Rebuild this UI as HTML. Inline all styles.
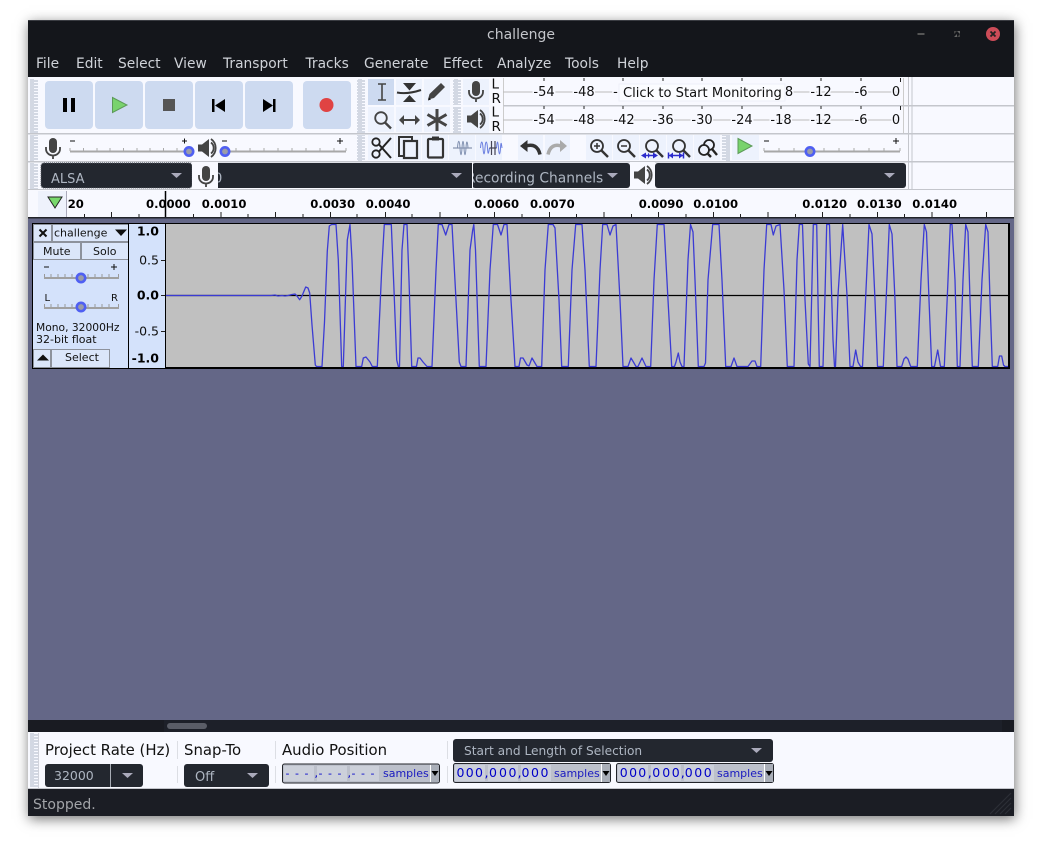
<!DOCTYPE html>
<html><head><meta charset="utf-8"><style>
html,body{margin:0;padding:0;background:#fff;width:1046px;height:856px;overflow:hidden}
#w{position:absolute;left:28px;top:20px;width:986px;height:796px;box-shadow:1px 3px 12px rgba(0,0,0,.55)}
svg{position:absolute;left:0;top:0}
text{font-family:"DejaVu Sans","Liberation Sans",sans-serif}
.m{font-size:13.8px;fill:#cfd2d8}
.r{font-size:11.6px;font-weight:bold;fill:#000}
.v{font-size:13px;fill:#111}
.t{font-size:11px;fill:#111}
.l{font-size:14.9px;fill:#111}
.c{font-size:13px;fill:#aeb6c2}
.s{font-size:11px;fill:#1a1ac0}
.d{font-size:12.5px;fill:#0000c8}
.b{fill:#edf2fd}
</style></head><body><div id="w"></div>
<svg width="1046" height="856" viewBox="0 0 1046 856">
<defs>
<pattern id="gp" width="8" height="3" patternUnits="userSpaceOnUse"><rect width="8" height="3" fill="#d3d8e3"/><rect x="2" y="1" width="4" height="1" fill="#f8f9ff"/></pattern>
<g id="mic"><rect x="-4" y="-10" width="8" height="15" rx="4" fill="#444"/><path d="M-7-1V1a7 6.500 0 0 0 14 0V-1M0 7.500V11" fill="none" stroke="#444" stroke-width="1.800"/></g>
<g id="spk"><path d="M-8-3.500H-4L3-9V9L-4 3.500H-8Z" fill="#444"/><path d="M5-5.500a7 7 0 0 1 0 11M5-9a11 11 0 0 1 0 18" fill="none" stroke="#444" stroke-width="1.800"/></g>
<g id="kn"><circle r="4.200" fill="#9a9ca8" stroke="#4f5ff2" stroke-width="2.600"/></g>
</defs>

<!-- window -->
<rect x="28" y="20" width="986" height="796" fill="#14161b"/>
<rect x="28" y="20" width="986" height="1" fill="#3a3c42"/>
<text x="521" y="39" text-anchor="middle" style="font-size:14px" fill="#c4c6cb">challenge</text>
<rect x="917.500" y="33" width="7" height="2" fill="#555"/>
<path d="M954 37 957 37 957 34ZM957 31 960 31 960 34Z" fill="#666"/><path d="M954 34 957 31 954 31ZM960 34 957 37 960 37Z" fill="#444"/>
<circle cx="993" cy="34" r="7" fill="#cc4c58"/><path d="M990.500 31.500 995.500 36.500M995.500 31.500 990.500 36.500" stroke="#222" stroke-width="1.800"/>

<text class="m" x="36" y="68">File</text><text class="m" x="76" y="68">Edit</text><text class="m" x="118" y="68">Select</text><text class="m" x="174" y="68">View</text><text class="m" x="223" y="68">Transport</text><text class="m" x="305.500" y="68">Tracks</text><text class="m" x="364" y="68">Generate</text><text class="m" x="443" y="68">Effect</text><text class="m" x="497" y="68">Analyze</text><text class="m" x="565" y="68">Tools</text><text class="m" x="617" y="68">Help</text>

<!-- toolbar bg -->
<rect x="28" y="77" width="986" height="113" fill="#f8f9ff"/>
<rect x="28" y="133" width="986" height="1.500" fill="#c4c6cc"/>
<rect x="28" y="161" width="986" height="1.500" fill="#c4c6cc"/>
<rect x="503" y="105" width="511" height="1.500" fill="#c4c6cc"/>
<rect x="908" y="77" width="1" height="113" fill="#c4c6cc"/><rect x="911.500" y="77" width="1" height="113" fill="#c4c6cc"/>

<rect x="30" y="79" width="8" height="54" fill="url(#gp)"/>
<rect x="30" y="135" width="8" height="26" fill="url(#gp)"/>
<rect x="30" y="163" width="8" height="26" fill="url(#gp)"/>
<rect x="357" y="79" width="8" height="54" fill="url(#gp)"/>
<rect x="357" y="135" width="8" height="26" fill="url(#gp)"/>
<rect x="453" y="79" width="8" height="26" fill="url(#gp)"/>
<rect x="453" y="107" width="8" height="26" fill="url(#gp)"/>
<rect x="722" y="135" width="8" height="26" fill="url(#gp)"/>

<!-- transport -->
<g fill="#cddaf0"><rect x="45" y="81" width="48" height="48" rx="4"/><rect x="95" y="81" width="48" height="48" rx="4"/><rect x="145" y="81" width="48" height="48" rx="4"/><rect x="195" y="81" width="48" height="48" rx="4"/><rect x="245" y="81" width="48" height="48" rx="4"/><rect x="303" y="81" width="48" height="48" rx="4"/></g>
<rect x="63" y="98" width="4" height="14" fill="#000"/><rect x="71" y="98" width="4" height="14" fill="#000"/>
<path d="M112.500 97.500V112.500L127 105Z" fill="#79d36d" stroke="#5c9a58"/>
<rect x="163" y="99" width="12" height="12" fill="#555"/>
<rect x="212" y="99" width="2.500" height="13" fill="#000"/><path d="M225 99V112L215 105.500Z" fill="#000"/>
<rect x="273" y="99" width="2.500" height="13" fill="#000"/><path d="M263 99V112L273 105.500Z" fill="#000"/>
<circle cx="326.500" cy="105" r="7" fill="#e04343"/>

<!-- mixer row -->
<use href="#mic" x="53" y="148"/>
<use href="#spk" x="206" y="148"/>
<rect x="70" y="150.500" width="118" height="2" fill="#a8a8a8"/>
<rect x="222" y="150.500" width="124" height="2" fill="#a8a8a8"/>
<path d="M70 141h5M182 141h5M184.500 138.500v5M222 141h5M337 141h6M340 138v6M764 141h5M893 141h6M896 138v6" stroke="#111" stroke-width="1"/>
<path d="M70 148v3M83.500 148v3M97 148v3M110 148v3M123.500 148v3M137 148v3M150 148v3M163.500 148v3M177 148v3M222.500 148v3M236 148v3M250 148v3M264 148v3M278 148v3M292 148v3M306 148v3M320 148v3M334 148v3M346 148v3M764 148v3M779 148v3M794 148v3M809 148v3M824 148v3M839 148v3M854 148v3M869 148v3M884 148v3M900 148v3" stroke="#aaa"/>
<use href="#kn" x="189" y="151.500"/><use href="#kn" x="225" y="151.500"/>

<!-- device row -->
<rect x="41" y="163" width="151" height="25" rx="3" fill="#23272f" stroke="#555a63" stroke-dasharray="1 1"/>
<text class="c" x="51" y="183">ALSA</text>
<path d="M171 173H182L176.500 178Z" fill="#aab"/>
<rect x="218" y="163" width="254" height="25" fill="#23272f"/>
<rect x="192" y="162" width="26" height="27" fill="#f8f9ff"/>
<svg x="218" y="163" width="10" height="25"><text class="c" x="-4" y="19.500">0</text></svg>
<use href="#mic" x="206" y="176"/>
<path d="M451 173H462L456.500 178Z" fill="#aab"/>
<rect x="472" y="163" width="158" height="25" rx="3" fill="#23272f"/>
<svg x="473" y="163" width="157" height="25"><text class="c" x="-7" y="19.500" style="font-size:13.8px">Recording Channels</text></svg>
<rect x="472" y="162" width="1" height="27" fill="#f8f9ff"/>
<path d="M607 173H618L612.500 178Z" fill="#aab"/>
<rect x="655" y="163" width="251" height="25" rx="3" fill="#23272f"/>
<rect x="630" y="162" width="25" height="27" fill="#f8f9ff"/>
<use href="#spk" x="642" y="175"/>
<path d="M884 173H895L889.500 178Z" fill="#aab"/>

<!-- tools -->
<g class="b">
<rect x="396" y="79" width="26" height="26"/><rect x="424" y="79" width="26" height="26"/>
<rect x="368" y="107" width="26" height="25"/><rect x="396" y="107" width="26" height="25"/><rect x="424" y="107" width="26" height="25"/>
<rect x="368" y="135" width="26" height="25"/><rect x="395" y="135" width="26" height="25"/><rect x="422" y="135" width="26" height="25"/><rect x="449" y="135" width="26" height="25"/><rect x="476" y="135" width="26" height="25"/>
<rect x="518" y="135" width="25" height="25"/><rect x="545" y="135" width="25" height="25"/>
<rect x="586" y="135" width="26" height="25"/><rect x="613" y="135" width="26" height="25"/><rect x="640" y="135" width="26" height="25"/><rect x="667" y="135" width="26" height="25"/><rect x="694" y="135" width="26" height="25"/>
<rect x="732" y="135" width="27" height="25"/>
<rect x="463" y="79" width="26" height="26"/><rect x="463" y="107" width="26" height="26"/>
</g>
<rect x="368" y="79" width="26" height="26" fill="#cddaf0"/>
<!-- I beam -->
<path d="M378 84h8M382 84v16M378 100h8" stroke="#444" stroke-width="1.600" fill="none"/>
<!-- envelope -->
<path d="M397 92.500C405 94 412 93 421 90" stroke="#333" stroke-width="2" fill="none"/>
<path d="M403 83H416L409.500 90.500ZM403 102H416L409.500 95Z" fill="#333"/>
<!-- pencil -->
<path d="M428 99.500 429.500 94 441 83 445 87 434 98Z" fill="#444"/><path d="M428 100.500l3-1-2-2Z" fill="#111"/>
<!-- zoom tool -->
<circle cx="381" cy="118" r="5.800" fill="none" stroke="#444" stroke-width="1.800"/><path d="M385 122.500 391 128.500" stroke="#444" stroke-width="2.400"/>
<!-- time shift -->
<path d="M402 120H417" stroke="#444" stroke-width="2"/><path d="M399 120 404 115V125ZM420 120 415 115V125Z" fill="#444"/>
<!-- multi -->
<path d="M437 109V131M427.500 114.500 446.500 125.500M446.500 114.500 427.500 125.500" stroke="#444" stroke-width="3"/>
<!-- scissors -->
<circle cx="376" cy="154" r="3.700" fill="none" stroke="#222" stroke-width="1.800"/><circle cx="376" cy="142" r="3.700" fill="none" stroke="#222" stroke-width="1.800"/>
<path d="M379 151.500 391 138M379 144.500 391 158" stroke="#222" stroke-width="2"/>
<!-- copy -->
<path d="M403 156H399V137H412V140" fill="none" stroke="#333" stroke-width="2"/><rect x="404" y="141" width="13" height="17" fill="none" stroke="#333" stroke-width="2.200"/>
<!-- paste -->
<rect x="428" y="139" width="15" height="18.500" rx="1" fill="none" stroke="#333" stroke-width="2.200"/><rect x="432" y="136.500" width="7" height="4" fill="#333"/>
<!-- trim / silence -->
<path d="M453 148H472" stroke="#8a96b0" stroke-width="1.200"/>
<path d="M457.500 148C458 139 459.500 139 460 148S461.500 157 462 148 463.500 139 464 148 465.500 157 466 148 467.500 141 468 148" stroke="#8090b0" stroke-width="1" fill="none"/>
<path d="M480.500 148C481 140 482.500 140 483 148S484.500 156 485 148 487 140 487.500 148 488.500 154 489.500 148M496.500 148C497 140 498 140 498.500 148S500 156 500.500 148 501.500 144 502 148" stroke="#6a7ee0" stroke-width="1" fill="none"/><path d="M491.500 141v14M495 141v14M489.500 148h7" stroke="#445" stroke-width="1.200"/>
<!-- undo redo -->
<path d="M520 146 527.500 140V152Z" fill="#333"/><path d="M526 146C533 144 538 146 540 154.500" fill="none" stroke="#333" stroke-width="3.500"/>
<path d="M567 146 560 140V152Z" fill="#aaa"/><path d="M561 146C555 144 550 146 548 154.500" fill="none" stroke="#aaa" stroke-width="3.500"/>
<!-- zooms -->
<circle cx="597" cy="146" r="6" fill="none" stroke="#333" stroke-width="1.800"/><path d="M594 146h6M597 143v6" stroke="#333" stroke-width="1.500"/><path d="M601.500 150.500 608 157" stroke="#333" stroke-width="2.400"/>
<circle cx="624" cy="146" r="6" fill="none" stroke="#333" stroke-width="1.800"/><path d="M621 146h6" stroke="#333" stroke-width="1.500"/><path d="M628.500 150.500 635 157" stroke="#333" stroke-width="2.400"/>
<circle cx="652" cy="146" r="6" fill="none" stroke="#333" stroke-width="1.800"/><path d="M656.500 150.500 663 157" stroke="#333" stroke-width="2.400"/><path d="M643 155.500H656" stroke="#2a2acc" stroke-width="1.500"/><path d="M641 155.500 646 152.500V158.500ZM658 155.500 653 152.500V158.500ZM650 155.500 648 152.500V158.500Z" fill="#2a2acc"/>
<circle cx="679" cy="146" r="6" fill="none" stroke="#333" stroke-width="1.800"/><path d="M683.500 150.500 690 157" stroke="#333" stroke-width="2.400"/><path d="M669 155.500H683M668.500 152.500V158.500M683.500 152.500V158.500" stroke="#2a2acc" stroke-width="1.500"/><path d="M669 155.500 673 152.500V158.500ZM683 155.500 679 152.500V158.500Z" fill="#2a2acc"/>
<circle cx="709" cy="145" r="5" fill="none" stroke="#222" stroke-width="1.800"/><circle cx="704" cy="150" r="5" fill="#edf2fd" stroke="#222" stroke-width="1.800"/><path d="M712 149 717 155M708 154 711 157" stroke="#222" stroke-width="2.400"/>
<path d="M738 138.500V153.500L752 146Z" fill="#79d36d" stroke="#5c9a58"/>
<rect x="764" y="150.500" width="136" height="2" fill="#a8a8a8"/><use href="#kn" x="810" y="151.500"/>

<!-- meters -->
<use href="#mic" x="476" y="91"/><use href="#spk" x="475" y="119"/>
<text class="v" x="491.500" y="88.500" style="font-size:13.500px">L</text><text class="v" x="491.500" y="103" style="font-size:13.500px">R</text>
<text class="v" x="491.500" y="116.500" style="font-size:13.500px">L</text><text class="v" x="491.500" y="131" style="font-size:13.500px">R</text>
<rect x="503" y="78" width="1" height="27" fill="#ccc"/><rect x="503" y="106" width="1" height="27" fill="#ccc"/>
<rect x="503" y="91.500" width="396" height="1" fill="#bbb"/><rect x="503" y="119.500" width="396" height="1" fill="#bbb"/>
<path d="M544 78v3M584 78v3M623 78v3M663 78v3M702 78v3M742 78v3M781 78v3M821 78v3M861 78v3M900.500 78v4M544 106v3M584 106v3M623 106v3M663 106v3M702 106v3M742 106v3M781 106v3M821 106v3M861 106v3M900.500 106v4" stroke="#222"/>
<path d="M903.500 78V105M903.500 106V133" stroke="#ccc"/>
<g class="v" text-anchor="middle" style="paint-order:stroke;stroke:#f8f9ff;stroke-width:3px">
<text x="544" y="96">-54</text><text x="584" y="96">-48</text><text x="615.500" y="96">-</text><text x="789" y="96">8</text><text x="821" y="96">-12</text><text x="861" y="96">-6</text><text x="896" y="96">0</text>
<text x="544" y="124">-54</text><text x="584" y="124">-48</text><text x="624" y="124">-42</text><text x="663" y="124">-36</text><text x="702" y="124">-30</text><text x="742" y="124">-24</text><text x="781" y="124">-18</text><text x="821" y="124">-12</text><text x="861" y="124">-6</text><text x="896" y="124">0</text>
</g>
<rect x="619" y="84" width="166" height="17" fill="#fbfcff" stroke="#eef0f8"/>
<text x="623" y="97" style="font-size:13.100px" fill="#111">Click to Start Monitoring</text>

<!-- ruler -->
<rect x="28" y="190" width="986" height="28" fill="#f8f9ff"/>
<rect x="28" y="189" width="986" height="1" fill="#c4c6cc"/>
<rect x="38" y="191" width="28" height="26" fill="#eef2fc"/><rect x="66" y="191" width="1" height="26" fill="#aab"/>
<path d="M48 197H62L55 208Z" fill="#78d86c" stroke="#222" stroke-width="1"/>
<svg x="67" y="190" width="20" height="26"><text class="r" x="0.700" y="18">20</text></svg>
<text class="r" x="146" y="208">0.0000</text><text class="r" x="201.700" y="208">0.0010</text><text class="r" x="310.300" y="208">0.0030</text><text class="r" x="365.700" y="208">0.0040</text><text class="r" x="474.300" y="208">0.0060</text><text class="r" x="530" y="208">0.0070</text><text class="r" x="638.700" y="208">0.0090</text><text class="r" x="693.300" y="208">0.0100</text><text class="r" x="802.300" y="208">0.0120</text><text class="r" x="857" y="208">0.0130</text><text class="r" x="912.300" y="208">0.0140</text>
<path d="M84.500 214v3M111.500 212v5M139 214v3M193.500 214v3M221 212v5M248 214v3M275.500 212v5M303 214v3M330.500 212v5M357 214v3M385.500 212v5M412 214v3M440 212v5M467.500 214v3M494.500 212v5M522 214v3M549.500 212v5M576.500 214v3M604 212v5M631.500 214v3M658.500 212v5M686 214v3M713.500 212v5M740.500 214v3M768 212v5M795.500 214v3M822.500 212v5M850 214v3M877.500 212v5M904.500 214v3M932 212v5M959.500 214v3M986.500 212v5" stroke="#222"/>
<path d="M165.500 191v26" stroke="#000" stroke-width="1.500"/>
<rect x="28" y="217" width="986" height="1.500" fill="#22242a"/>

<!-- track area -->
<rect x="28" y="218.500" width="986" height="502" fill="#646787"/>
<rect x="32" y="223" width="978" height="146" fill="#000"/>
<rect x="33" y="224" width="95" height="144" fill="#d4e2fb"/>
<rect x="129" y="224" width="36" height="144" fill="#d4e2fb"/>
<rect x="166" y="224" width="842" height="143" fill="#c0c0c0"/>
<!-- track controls -->
<g fill="#dbe6fa" stroke="#8d929c" stroke-width="1">
<rect x="33.500" y="224.500" width="18" height="17"/><rect x="52.500" y="224.500" width="76" height="17"/>
<rect x="33.500" y="242.500" width="47" height="17"/><rect x="81.500" y="242.500" width="47" height="17"/>
<rect x="33.500" y="349.500" width="17" height="18"/><rect x="51.500" y="349.500" width="58" height="18"/>
</g>
<path d="M39.500 229.500 46.500 236.500M46.500 229.500 39.500 236.500" stroke="#111" stroke-width="2"/>
<text class="t" x="54" y="236.500">challenge</text><path d="M115 229.500H127L121 236Z" fill="#111"/>
<text class="t" x="43" y="255">Mute</text><text class="t" x="93" y="255">Solo</text>
<path d="M37 360.500 43 354.500 49 360.500Z" fill="#111"/><text class="t" x="65" y="361">Select</text>
<path d="M44 267h5M111 267h6M114 264v6" stroke="#111"/>
<text class="t" x="44.500" y="301" style="font-size:10px">L</text><text class="t" x="111" y="301" style="font-size:10px">R</text>
<rect x="44" y="277" width="75" height="2" fill="#a0a0a0"/><rect x="44" y="307" width="75" height="2" fill="#a0a0a0"/>
<path d="M44.500 274v3M51 274v3M58 274v3M65 274v3M72 274v3M88 274v3M95 274v3M102 274v3M109 274v3M118.500 274v3M44.500 304v3M51 304v3M58 304v3M65 304v3M72 304v3M88 304v3M95 304v3M102 304v3M109 304v3M118.500 304v3" stroke="#999"/>
<use href="#kn" x="81" y="278"/><use href="#kn" x="81" y="307"/>
<text class="t" x="36" y="331" style="font-size:10.700px">Mono, 32000Hz</text><text class="t" x="36" y="343">32-bit float</text>
<!-- v ruler -->
<g text-anchor="end">
<text class="r" x="159" y="235.500" style="font-size:12.500px">1.0</text>
<text class="v" x="159" y="264.500" style="font-size:12.500px">0.5</text>
<text class="r" x="159" y="299.500" style="font-size:12.500px">0.0</text>
<text class="v" x="159" y="335.500" style="font-size:12.500px">-0.5</text>
<text class="r" x="159" y="362.500" style="font-size:12.500px">-1.0</text>
</g>
<path d="M161 260.500h4M161 295.500h4M161 331.500h4" stroke="#222"/>
<path d="M128.500 224V368M165.500 224V368" stroke="#000"/>
<!-- wave -->
<path d="M166 295.500H1008" stroke="#000" stroke-width="1.300"/>
<path fill="none" stroke="#3b3bd4" stroke-width="1.300" stroke-linejoin="round" d="M166 295.500H271L275 295 278 296 282 295.500 285 296 288 295.500 292 294.500 295 294 297 296 299.700 299.700 302 296 305.700 287 308 288 309.700 293 312 325 315.300 365 316.500 366.500H322L324.500 322 327.300 251 329.300 226 331.700 224.500H336L338.300 260 341.700 366.500H343.300L347.300 240 350 224.500 352 260 356 366.500H361.700L363.300 358 366 357 370 362 372.300 366.500H377.300L381.700 270 384.300 224.500H391.300L394 290 396.700 360 398.300 366.500H399.500L402 250 404 224.500H407L409 280 411.700 366.500H416.500L418 358 420 358 423 362 427 366.500H432L436 270 438.300 224.500H442L445.700 235 449 224.500H452L456 300 459.300 362 461 366.500H466L470 250 472.700 230 473.800 224.500 475.500 250 479.300 366.500H486L490 270 493.300 224.500H497.500L501 235 504 224.500H507L511 300 515 366.500H519L520.500 358 523 358 527 365 529 366 532 358 537 366.500H541.700L545 270 548.300 224.500H553L555 228 559 300 561.700 366.500H568.300L572 270 575.700 224.500H582L585 270 589.300 366.500H596L600 270 602.700 224.500H607L610 235 613 226 616 224.500 620 300 623 366.500H628L631 358 634 363 636 366.500H638L642 358 646 366.500H650.700L654 280 657.300 224.500H664L668 300 671.700 366.500H674.500L676 362 678.300 353 680 362 682 366.500H684L688 260 690.500 224.500 693 232 695 280 698.300 366.500H704L705.500 363 708 280 712.700 224.500H719L722 280 725.700 366.500H731L734 358 737 366.500H748L752 361 755 361 757 366.500H760.700L764 270 766.700 224.500H771L773.300 235 776 226 780 224.500 784 290 787.300 366.500H794L797 260 799.300 224.500H802.500L805 300 808.300 364 810 366.500 811.700 295 813.300 224.500H816.700L818 300 819.300 366.500H823L825 295 826.700 224.500H829.500L833 340 834.500 366.500H835.500L838 295 842.700 224.500 847 295 850 366.500H853L855.700 350 858 362 860.500 366.500H862.500L866 290 869 224.500 872 234 875 300 877.500 366.500H883.300L889.300 224.500 892 234 895 300 897 366.500H901.700L904 359 906 357 908 359 910.700 366.500H917.300L921 280 924.300 224.500 926.500 232 929 300 931.700 366.500H934.500L937.700 350 940.500 366.500H944.300L948 280 950.300 224.500H952L955 280 957.300 366.500H960L963 280 965.700 224.500 968 232 970 300 972.300 366.500H978.300L982 280 985.700 224.500 988 232 990 300 992.300 366.500H997.700L999.500 356H1001.700L1003.500 365 1005 366.500H1008"/>

<!-- scrollbar -->
<rect x="28" y="720" width="986" height="12" fill="#1d2029"/>
<rect x="28" y="720" width="136" height="12" fill="#191b22"/>
<rect x="1002" y="720" width="12" height="12" fill="#191b22"/>
<rect x="167" y="723" width="40" height="6" rx="3" fill="#5a5d67"/>

<!-- bottom -->
<rect x="28" y="732" width="986" height="57" fill="#f8f9ff"/>
<rect x="28" y="788" width="986" height="1" fill="#c4c6cc"/>
<rect x="30" y="733" width="8" height="54" fill="url(#gp)"/>
<rect x="38" y="733" width="1" height="55" fill="#d0d2da"/>
<text class="l" x="45" y="755">Project Rate (Hz)</text><text class="l" x="184" y="755">Snap-To</text><text class="l" x="282" y="755">Audio Position</text>
<path d="M177.500 741v18M177.500 766v17M275.500 741v18M275.500 766v17M447.500 741v18M447.500 766v17" stroke="#dcdee4"/>
<rect x="45" y="764" width="98" height="23" rx="3" fill="#23272f"/><rect x="110" y="764" width="1" height="23" fill="#a8adb5"/>
<text class="c" x="54" y="780" style="font-size:12.500px">32000</text><path d="M122 773H133L127.500 778Z" fill="#aab"/>
<rect x="184" y="764" width="85" height="23" rx="3" fill="#23272f"/>
<text class="c" x="195" y="781">Off</text><path d="M247 773H258L252.500 778Z" fill="#aab"/>
<!-- audio pos -->
<rect x="282.500" y="764" width="157" height="19" rx="2" fill="#bcc0cb" stroke="#22242a"/>
<rect x="284" y="766" width="30" height="15" fill="#ccd0da"/><rect x="317" y="766" width="30" height="15" fill="#ccd0da"/><rect x="350" y="766" width="29" height="15" fill="#ccd0da"/>
<text class="d" style="font-size:11px" x="285.500 295 304.500 314.500 318.500 328 337.500 347.500 351.500 361 370.500" y="777">---,---,---</text>
<text class="s" x="383" y="777">samples</text>
<rect x="430" y="765" width="9" height="17" fill="#a9aeb8"/><rect x="430" y="765" width="1" height="17" fill="#fff"/><path d="M431.500 771H438.500L435 776Z" fill="#000"/>
<!-- selection -->
<rect x="453" y="739" width="320" height="23" rx="3" fill="#23272f"/>
<text class="c" x="464" y="755" style="font-size:12.200px">Start and Length of Selection</text><path d="M751 748H762L756.500 753Z" fill="#aab"/>
<rect x="453.500" y="763.500" width="157" height="19" rx="2" fill="#bcc0cb" stroke="#22242a"/>
<rect x="455" y="765" width="30" height="16" fill="#ccd0da"/><rect x="488" y="765" width="30" height="16" fill="#ccd0da"/><rect x="521" y="765" width="30" height="16" fill="#ccd0da"/>
<text class="d" x="456.500 465.800 475 484.500 489 499 508.500 517.500 521.500 531 540.500" y="777">000,000,000</text><text class="s" x="554" y="777">samples</text>
<rect x="601" y="764" width="9" height="18" fill="#a9aeb8"/><rect x="601" y="764" width="1" height="18" fill="#fff"/><path d="M602.500 771H609.500L606 776Z" fill="#000"/>
<rect x="616.500" y="763.500" width="157" height="19" rx="2" fill="#bcc0cb" stroke="#22242a"/>
<rect x="618" y="765" width="30" height="16" fill="#ccd0da"/><rect x="651" y="765" width="30" height="16" fill="#ccd0da"/><rect x="684" y="765" width="30" height="16" fill="#ccd0da"/>
<text class="d" x="619.800 629.100 638.300 647.800 652.300 662.300 671.800 680.800 684.800 694.300 703.800" y="777">000,000,000</text><text class="s" x="717" y="777">samples</text>
<rect x="764" y="764" width="9" height="18" fill="#a9aeb8"/><rect x="764" y="764" width="1" height="18" fill="#fff"/><path d="M765.500 771H772.500L769 776Z" fill="#000"/>

<!-- status -->
<rect x="28" y="789" width="986" height="27" fill="#1b1d24"/>
<text x="33" y="809" style="font-size:14px" fill="#a2a4a8">Stopped.</text>
<path d="M990 814 1011 793M995 814 1011 798M1000 814 1011 803M1005 814 1011 808" stroke="#2c2f36" stroke-width="1.200"/>
</svg>
</body></html>
